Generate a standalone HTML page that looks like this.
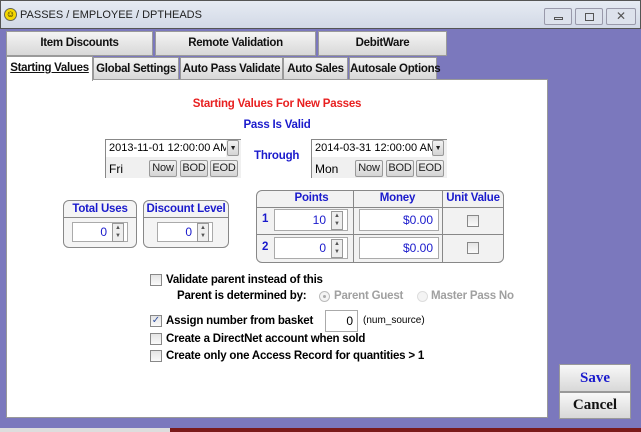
<!DOCTYPE html>
<html><head><style>
*{box-sizing:border-box;margin:0;padding:0}
body{width:641px;height:432px;overflow:hidden;background:#7b78bd;font-family:"Liberation Sans",Arial,sans-serif;position:relative}
.a{position:absolute}
.b{font-weight:bold;font-size:11.5px;letter-spacing:-0.2px;white-space:nowrap}
.tab{position:absolute;background:linear-gradient(#f4f4f4,#d8d8d8);border:1px solid #9a9a9a;font-weight:bold;font-size:11.5px;letter-spacing:-0.3px;white-space:nowrap;text-align:center;line-height:23px;color:#111}
.btn{position:absolute;background:linear-gradient(#f2f2f2,#d4d4d4);border:1px solid #999;border-radius:2px;font-size:11px;text-align:center;line-height:15px;color:#222;letter-spacing:-0.2px}
.cb{position:absolute;width:12px;height:12px;border:1px solid #888;background:linear-gradient(#e4e4e4,#fafafa)}
.blue{color:#1a1acc}
.grp{position:absolute;border:1px solid #888;border-radius:6px;background:#f4f4f4}
.inp{position:absolute;background:#fff;border:1px solid #aaa}
.spin{position:absolute;width:12px;height:19px;border:1px solid #999;background:#eee;font-size:6px;line-height:8px;text-align:center;color:#555}
</style></head><body>
<div class="a" style="left:0;top:0;width:641px;height:29px;background:linear-gradient(#e6ebf3,#d2d9e6);border:1px solid #555"></div>
<div class="a" style="left:4px;top:8px;width:13px;height:13px;border-radius:50%;background:#f5d800;border:1px solid #665;font-size:9px;line-height:11px;text-align:center">☺</div>
<div class="a" style="left:20px;top:9px;font-size:11px;color:#222">PASSES / EMPLOYEE / DPTHEADS</div>
<div class="a" style="left:544px;top:8px;width:28px;height:17px;border:1px solid #99a;border-radius:2px;background:#dde2ec"><div class="a" style="left:9px;top:8px;width:9px;height:3px;border:1px solid #555"></div></div>
<div class="a" style="left:575px;top:8px;width:28px;height:17px;border:1px solid #99a;border-radius:2px;background:#dde2ec"><div class="a" style="left:9px;top:4px;width:9px;height:8px;border:1px solid #555"></div></div>
<div class="a" style="left:606px;top:8px;width:30px;height:17px;border:1px solid #99a;border-radius:2px;background:#dde2ec;font-size:12px;text-align:center;line-height:15px;color:#555">✕</div>

<div class="tab" style="left:6px;top:31px;width:147px;height:25px">Item Discounts</div>
<div class="tab" style="left:155px;top:31px;width:161px;height:25px">Remote Validation</div>
<div class="tab" style="left:318px;top:31px;width:129px;height:25px">DebitWare</div>
<div class="a" style="left:6px;top:79px;width:542px;height:339px;background:#fff;border:1px solid #999"></div>
<div class="tab" style="left:6px;top:56px;width:87px;height:25px;background:#fff;border-bottom:none"><span style="text-decoration:underline">Starting Values</span></div>
<div class="tab" style="left:93px;top:57px;width:86px;height:23px;line-height:23px">Global Settings</div>
<div class="tab" style="left:180px;top:57px;width:103px;height:23px;line-height:23px">Auto Pass Validate</div>
<div class="tab" style="left:283px;top:57px;width:65px;height:23px;line-height:23px">Auto Sales</div>
<div class="tab" style="left:349px;top:57px;width:88px;height:23px;line-height:23px">Autosale Options</div>

<div class="a b" style="left:0;width:554px;top:98px;text-align:center;color:#e82020">Starting Values For New Passes</div>
<div class="a b blue" style="left:0;width:554px;top:119px;text-align:center">Pass Is Valid</div>
<div class="a b blue" style="left:254px;top:150px">Through</div>

<div class="a" style="left:105px;top:139px;width:136px;height:39px;background:#f0f0f0;border-left:1px solid #888;border-top:1px solid #888"></div>
<div class="a" style="left:106px;top:140px;width:120px;height:17px;background:#fff;font-size:11px;line-height:16px;padding-left:3px;overflow:hidden;white-space:nowrap">2013-11-01 12:00:00 AM</div>
<div class="btn" style="left:227px;top:140px;width:12px;height:16px;font-size:7px">▼</div>
<div class="a" style="left:109px;top:162px;font-size:12px">Fri</div>
<div class="btn" style="left:149px;top:160px;width:28px;height:17px">Now</div>
<div class="btn" style="left:180px;top:160px;width:28px;height:17px">BOD</div>
<div class="btn" style="left:210px;top:160px;width:28px;height:17px">EOD</div>

<div class="a" style="left:311px;top:139px;width:136px;height:39px;background:#f0f0f0;border-left:1px solid #888;border-top:1px solid #888"></div>
<div class="a" style="left:312px;top:140px;width:120px;height:17px;background:#fff;font-size:11px;line-height:16px;padding-left:3px;overflow:hidden;white-space:nowrap">2014-03-31 12:00:00 AM</div>
<div class="btn" style="left:432px;top:140px;width:12px;height:16px;font-size:7px">▼</div>
<div class="a" style="left:315px;top:162px;font-size:12px">Mon</div>
<div class="btn" style="left:355px;top:160px;width:28px;height:17px">Now</div>
<div class="btn" style="left:386px;top:160px;width:28px;height:17px">BOD</div>
<div class="btn" style="left:416px;top:160px;width:28px;height:17px">EOD</div>

<div class="grp" style="left:63px;top:200px;width:74px;height:48px"></div>
<div class="a b blue" style="left:63px;top:203px;width:74px;text-align:center">Total Uses</div>
<div class="a" style="left:63px;top:217px;width:74px;border-top:1px solid #888"></div>
<div class="inp" style="left:72px;top:222px;width:56px;height:20px;font-size:12px;color:#1a1acc;text-align:right;padding-right:20px;line-height:18px">0</div>
<div class="spin" style="left:112px;top:223px">▲<br>▼</div>

<div class="grp" style="left:143px;top:200px;width:86px;height:48px"></div>
<div class="a b blue" style="left:143px;top:203px;width:86px;text-align:center">Discount Level</div>
<div class="a" style="left:143px;top:217px;width:86px;border-top:1px solid #888"></div>
<div class="inp" style="left:157px;top:222px;width:56px;height:20px;font-size:12px;color:#1a1acc;text-align:right;padding-right:20px;line-height:18px">0</div>
<div class="spin" style="left:197px;top:223px">▲<br>▼</div>

<div class="grp" style="left:256px;top:190px;width:248px;height:73px;background:#f2f2f2"></div>
<div class="a" style="left:353px;top:190px;height:73px;border-left:1px solid #888"></div>
<div class="a" style="left:442px;top:190px;height:73px;border-left:1px solid #888"></div>
<div class="a" style="left:256px;top:207px;width:248px;border-top:1px solid #888"></div>
<div class="a" style="left:256px;top:234px;width:248px;border-top:1px solid #888"></div>
<div class="a b blue" style="left:270px;top:192px;width:83px;text-align:center">Points</div>
<div class="a b blue" style="left:353px;top:192px;width:89px;text-align:center">Money</div>
<div class="a b blue" style="left:442px;top:192px;width:62px;text-align:center">Unit Value</div>
<div class="a b blue" style="left:262px;top:213px">1</div>
<div class="a b blue" style="left:262px;top:241px">2</div>
<div class="inp" style="left:274px;top:209px;width:74px;height:22px;font-size:12px;color:#1a1acc;text-align:right;padding-right:21px;line-height:20px">10</div>
<div class="spin" style="left:331px;top:211px">▲<br>▼</div>
<div class="inp" style="left:274px;top:237px;width:74px;height:22px;font-size:12px;color:#1a1acc;text-align:right;padding-right:21px;line-height:20px">0</div>
<div class="spin" style="left:331px;top:239px">▲<br>▼</div>
<div class="inp" style="left:359px;top:209px;width:80px;height:22px;font-size:12px;color:#1a1acc;text-align:right;padding-right:5px;line-height:20px">$0.00</div>
<div class="inp" style="left:359px;top:237px;width:80px;height:22px;font-size:12px;color:#1a1acc;text-align:right;padding-right:5px;line-height:20px">$0.00</div>
<div class="cb" style="left:467px;top:215px"></div>
<div class="cb" style="left:467px;top:242px"></div>

<div class="cb" style="left:150px;top:274px"></div>
<div class="a b" style="left:166px;top:274px">Validate parent instead of this</div>
<div class="a b" style="left:177px;top:290px">Parent is determined by:</div>
<div class="a" style="left:319px;top:291px;width:11px;height:11px;border-radius:50%;border:1px solid #bbb;background:#f4f4f4"><div class="a" style="left:3px;top:3px;width:3px;height:3px;border-radius:50%;background:#aaa"></div></div>
<div class="a b" style="left:334px;top:290px;color:#a0a0a0">Parent Guest</div>
<div class="a" style="left:417px;top:291px;width:11px;height:11px;border-radius:50%;border:1px solid #ddd;background:#f4f4f4"></div>
<div class="a b" style="left:431px;top:290px;color:#a0a0a0">Master Pass No</div>

<div class="cb" style="left:150px;top:315px;font-size:10px;line-height:10px;color:#3050a0;text-align:center">✓</div>
<div class="a b" style="left:166px;top:315px">Assign number from basket</div>
<div class="inp" style="left:325px;top:310px;width:33px;height:22px;font-size:12px;text-align:right;padding-right:4px;line-height:20px">0</div>
<div class="a" style="left:363px;top:315px;font-size:10px">(num_source)</div>
<div class="cb" style="left:150px;top:333px"></div>
<div class="a b" style="left:166px;top:333px">Create a DirectNet account when sold</div>
<div class="cb" style="left:150px;top:350px"></div>
<div class="a b" style="left:166px;top:350px">Create only one Access Record for quantities &gt; 1</div>

<div class="a" style="left:559px;top:364px;width:72px;height:28px;background:linear-gradient(#f8f8f8,#d8d8d8);border:1px solid #999;font-family:'Liberation Serif',serif;font-weight:bold;font-size:15px;text-align:center;line-height:26px;color:#1a1acc">Save</div>
<div class="a" style="left:559px;top:392px;width:72px;height:27px;background:linear-gradient(#f8f8f8,#d8d8d8);border:1px solid #999;font-family:'Liberation Serif',serif;font-weight:bold;font-size:15px;text-align:center;line-height:25px;color:#111">Cancel</div>

<div class="a" style="left:0;top:428px;width:641px;height:4px;background:#ddd"></div>
<div class="a" style="left:170px;top:428px;width:471px;height:4px;background:#7a1a1a"></div>
</body></html>
